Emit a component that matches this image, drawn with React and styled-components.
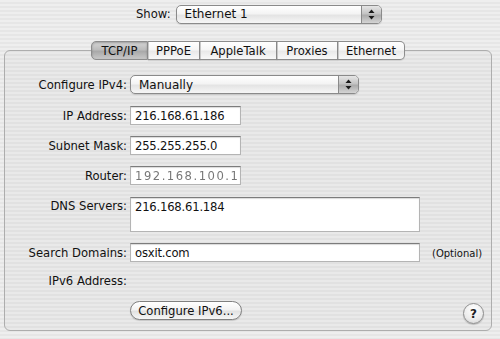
import React from 'react'
import styled, { createGlobalStyle } from 'styled-components'

const GlobalStyle = createGlobalStyle`
  html, body {
    margin: 0;
    padding: 0;
  }
  body {
    width: 500px;
    height: 339px;
    overflow: hidden;
    font-family: "DejaVu Sans", "Liberation Sans", sans-serif;
    font-size: 11.6px;
    color: #111;
    background: repeating-linear-gradient(180deg, #eeeeee 0px, #eeeeee 2px, #e6e6e6 2px, #e6e6e6 4px);
  }
`

const tabs = [
  { name: 'TCP/IP', w: 57, active: true },
  { name: 'PPPoE', w: 52 },
  { name: 'AppleTalk', w: 77 },
  { name: 'Proxies', w: 61 },
  { name: 'Ethernet', w: 67 },
]

const Arrows = () => (
  <svg width="7" height="11" viewBox="0 0 7 11">
    <path d="M3.5 0.5 L6.5 4 L0.5 4 Z" fill="#1a1a1a" />
    <path d="M3.5 10.5 L6.5 7 L0.5 7 Z" fill="#1a1a1a" />
  </svg>
)

const Popup = ({ value, width }) => (
  <PopupBox $w={width}>
    <PopupText>{value}</PopupText>
    <PopupArrow>
      <Arrows />
    </PopupArrow>
  </PopupBox>
)

export default function App() {
  return (
    <>
      <GlobalStyle />
      <Page>
        <ShowRow>
          <ShowLabel>Show:</ShowLabel>
          <Popup value="Ethernet 1" width={206} />
        </ShowRow>

        <TabBar>
          {tabs.map((t, i) => (
            <Tab key={t.name} $w={t.w} $active={t.active} $first={i === 0} $last={i === tabs.length - 1}>
              {t.name}
            </Tab>
          ))}
        </TabBar>

        <Panel>
          <Row>
            <Label>Configure IPv4:</Label>
            <Popup value="Manually" width={229} />
          </Row>
          <Row $gap={12}>
            <Label>IP Address:</Label>
            <Field $w={111}>216.168.61.186</Field>
          </Row>
          <Row $gap={11}>
            <Label>Subnet Mask:</Label>
            <Field $w={111}>255.255.255.0</Field>
          </Row>
          <Row $gap={11}>
            <Label>Router:</Label>
            <Field $w={111}>
              <Blurred>192.168.100.1</Blurred>
            </Field>
          </Row>
          <Row $gap={12}>
            <Label $top>DNS Servers:</Label>
            <Field $w={290} $h={35} $top>216.168.61.184</Field>
          </Row>
          <Row $gap={11}>
            <Label>Search Domains:</Label>
            <Field $w={290}>osxit.com</Field>
            <Hint>(Optional)</Hint>
          </Row>
          <Row $gap={9}>
            <Label>IPv6 Address:</Label>
          </Row>
          <BottomRow>
            <Spacer />
            <PillButton>Configure IPv6...</PillButton>
            <HelpButton>?</HelpButton>
          </BottomRow>
        </Panel>
      </Page>
    </>
  )
}

const Page = styled.div`
  display: flex;
  flex-direction: column;
  padding-top: 4px;
  height: 339px;
  box-sizing: border-box;
`

const ShowRow = styled.div`
  display: flex;
  align-items: center;
  gap: 5px;
  padding-left: 136px;
  height: 20px;
`

const ShowLabel = styled.span`
  white-space: nowrap;
`

const Label = styled.div`
  width: 122px;
  flex: none;
  text-align: right;
  white-space: nowrap;
  align-self: ${p => (p.$top ? 'flex-start' : 'center')};
  padding-top: ${p => (p.$top ? '2px' : '0')};
`

const PopupBox = styled.div`
  width: ${p => p.$w}px;
  height: 19px;
  box-sizing: border-box;
  display: flex;
  align-items: stretch;
  border: 1px solid #8a8a8a;
  border-radius: 5px;
  background: linear-gradient(180deg, #ffffff 0%, #f4f4f4 45%, #e4e4e4 55%, #f6f6f6 100%);
  box-shadow: 0 1px 1px rgba(0, 0, 0, 0.12);
  overflow: hidden;
`

const PopupText = styled.div`
  flex: 1;
  display: flex;
  align-items: center;
  padding-left: 8px;
  font-size: 12px;
`

const PopupArrow = styled.div`
  width: 19px;
  display: flex;
  align-items: center;
  justify-content: center;
  border-left: 1px solid #8a8a8a;
  background: linear-gradient(180deg, #e6e6e6 0%, #c4c4c4 45%, #acacac 55%, #d4d4d4 100%);
`

const TabBar = styled.div`
  display: flex;
  justify-content: center;
  margin-top: 17px;
  margin-right: 4px;
  position: relative;
  z-index: 1;
  height: 19px;
`

const Tab = styled.div`
  width: ${p => p.$w}px;
  height: 19px;
  box-sizing: border-box;
  display: flex;
  align-items: center;
  justify-content: center;
  border: 1px solid #8c8c8c;
  border-left-width: ${p => (p.$first ? '1px' : '0')};
  border-radius: ${p => (p.$first ? '5px 0 0 5px' : p.$last ? '0 5px 5px 0' : '0')};
  background: ${p =>
    p.$active
      ? 'linear-gradient(180deg, #d6d6d6 0%, #bcbcbc 45%, #a9a9a9 55%, #c8c8c8 100%)'
      : 'linear-gradient(180deg, #ffffff 0%, #f6f6f6 45%, #e9e9e9 55%, #f8f8f8 100%)'};
  box-shadow: ${p => (p.$active ? 'inset 0 1px 2px rgba(0,0,0,0.25)' : '0 1px 1px rgba(0,0,0,0.1)')};
  & + & {
    box-shadow: ${p => (p.$active ? 'none' : 'inset 1px 0 0 #c8c8c8, 0 1px 1px rgba(0,0,0,0.1)')};
  }
`

const Panel = styled.div`
  margin: -10px 8px 0 4px;
  height: 281px;
  box-sizing: border-box;
  border: 1px solid #adadad;
  border-radius: 6px;
  background: rgba(0, 0, 0, 0.02);
  padding-top: 24px;
  display: flex;
  flex-direction: column;
`

const Row = styled.div`
  display: flex;
  align-items: center;
  gap: 3px;
  min-height: 19px;
  margin-top: ${p => p.$gap || 0}px;
`

const Field = styled.div`
  width: ${p => p.$w}px;
  height: ${p => p.$h || 19}px;
  box-sizing: border-box;
  background: #fff;
  border: 1px solid #b4b4b4;
  border-top-color: #7c7c7c;
  box-shadow: inset 0 1px 1px rgba(0, 0, 0, 0.15);
  padding: ${p => (p.$top ? '2px 4px 0' : '0 4px')};
  display: flex;
  align-items: ${p => (p.$top ? 'flex-start' : 'center')};
  font-size: 11.6px;
  letter-spacing: -0.2px;
  white-space: nowrap;
`

const Blurred = styled.span`
  color: #555;
  letter-spacing: 1.5px;
  filter: blur(0.6px);
  opacity: 0.8;
`

const Hint = styled.span`
  font-size: 10px;
  margin-left: 9px;
  margin-top: 2px;
`

const BottomRow = styled.div`
  display: flex;
  align-items: flex-start;
  margin-top: 11px;
  gap: 3px;
`

const Spacer = styled.div`
  width: 122px;
`

const PillButton = styled.div`
  width: 112px;
  height: 19px;
  box-sizing: border-box;
  display: flex;
  align-items: center;
  justify-content: center;
  border: 1px solid #808080;
  border-radius: 10px;
  background: linear-gradient(180deg, #ffffff 0%, #f3f3f3 45%, #e2e2e2 55%, #f6f6f6 100%);
  box-shadow: 0 1px 1px rgba(0, 0, 0, 0.15);
`

const HelpButton = styled.div`
  margin-left: auto;
  margin-right: 7px;
  margin-top: 2px;
  width: 21px;
  height: 21px;
  box-sizing: border-box;
  border-radius: 50%;
  border: 1px solid #8e8e8e;
  background: radial-gradient(circle at 50% 30%, #ffffff 0%, #ececec 60%, #cfcfcf 100%);
  box-shadow: 0 1px 1px rgba(0, 0, 0, 0.2);
  display: flex;
  align-items: center;
  justify-content: center;
  font-weight: bold;
  font-size: 12px;
  color: #222;
`
